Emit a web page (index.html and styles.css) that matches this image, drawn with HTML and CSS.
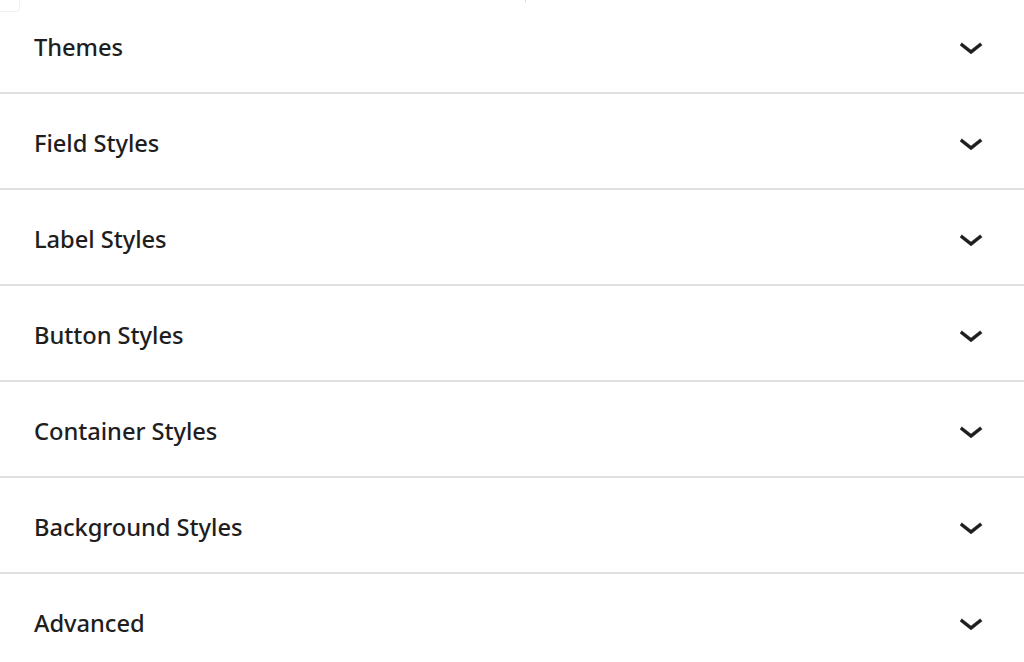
FILE: index.html
```html
<!DOCTYPE html>
<html lang="en">
<head>
<meta charset="utf-8">
<title>Styles</title>
<link rel="stylesheet" href="styles.css">
</head>
<body>
<div class="sidebar">
  <div class="ghost-box"></div>
  <div class="ghost-dot"></div>
  <div class="panels">
    <div class="panel"><span class="title">Themes</span><svg class="chev" viewBox="0 0 24 24"><path d="M17.5 11.6L12 16l-5.5-4.4.9-1.2L12 14l4.6-3.6 1 1.2z"/></svg></div>
    <div class="panel"><span class="title">Field Styles</span><svg class="chev" viewBox="0 0 24 24"><path d="M17.5 11.6L12 16l-5.5-4.4.9-1.2L12 14l4.6-3.6 1 1.2z"/></svg></div>
    <div class="panel"><span class="title">Label Styles</span><svg class="chev" viewBox="0 0 24 24"><path d="M17.5 11.6L12 16l-5.5-4.4.9-1.2L12 14l4.6-3.6 1 1.2z"/></svg></div>
    <div class="panel"><span class="title">Button Styles</span><svg class="chev" viewBox="0 0 24 24"><path d="M17.5 11.6L12 16l-5.5-4.4.9-1.2L12 14l4.6-3.6 1 1.2z"/></svg></div>
    <div class="panel"><span class="title">Container Styles</span><svg class="chev" viewBox="0 0 24 24"><path d="M17.5 11.6L12 16l-5.5-4.4.9-1.2L12 14l4.6-3.6 1 1.2z"/></svg></div>
    <div class="panel"><span class="title">Background Styles</span><svg class="chev" viewBox="0 0 24 24"><path d="M17.5 11.6L12 16l-5.5-4.4.9-1.2L12 14l4.6-3.6 1 1.2z"/></svg></div>
    <div class="panel"><span class="title">Advanced</span><svg class="chev" viewBox="0 0 24 24"><path d="M17.5 11.6L12 16l-5.5-4.4.9-1.2L12 14l4.6-3.6 1 1.2z"/></svg></div>
  </div>
</div>
</body>
</html>
```

FILE: styles.css
```css
html, body {
  margin: 0;
  padding: 0;
  background: #ffffff;
}

.sidebar {
  position: relative;
  width: 1024px;
  height: 662px;
  overflow: hidden;
  background: #ffffff;
  font-family: "Noto Sans", "Open Sans", sans-serif;
  color: #1e1e1e;
}

.ghost-box {
  position: absolute;
  left: -20px;
  top: -20px;
  width: 38px;
  height: 30px;
  border: 1px solid #f0f0f0;
  border-radius: 4px;
}

.ghost-dot {
  position: absolute;
  left: 525px;
  top: 0;
  width: 1px;
  height: 2px;
  background: #d8d8d8;
}

.panels {
  display: flex;
  flex-direction: column;
  margin-top: -4px;
}

.panel {
  display: flex;
  align-items: center;
  justify-content: space-between;
  height: 94px;
  padding: 0 29px 0 34px;
  border-top: 2px solid #e0e0e0;
}

.panel:first-child {
  border-top-color: transparent;
}

.title {
  font-size: 23.7px;
  font-weight: 500;
  letter-spacing: -0.05px;
  padding-top: 4px;
}

.chev {
  width: 48px;
  height: 48px;
  fill: #1e1e1e;
  stroke: #1e1e1e;
  stroke-width: 0.2;
  margin-top: 2px;
}
```
